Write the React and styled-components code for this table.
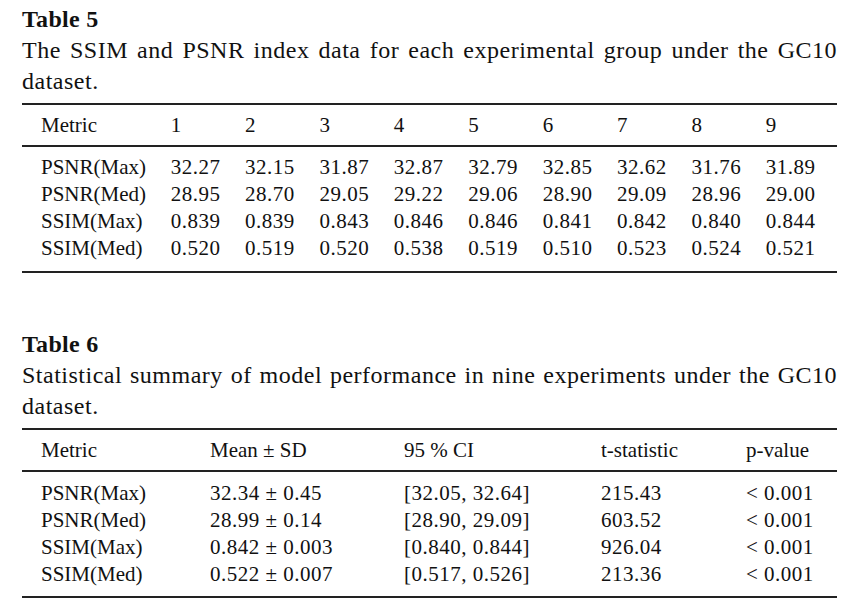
import React from "react";
import styled, { createGlobalStyle } from "styled-components";

const Global = createGlobalStyle`
  html, body { margin: 0; padding: 0; background: #fff; }
  body { font-family: "Liberation Serif", "Times New Roman", serif; color: #111; }
`;

const Page = styled.div`
  width: 815px;
  padding: 4px 0 0 22px;
`;

const Block = styled.section`
  margin-bottom: ${(p) => p.$gap || 0}px;
`;

const Heading = styled.div`
  font-size: 24px;
  line-height: 31px;
  font-weight: bold;
  letter-spacing: 0.3px;
`;

const Caption = styled.p`
  margin: 0 0 6px;
  font-size: 24px;
  line-height: 31px;
  letter-spacing: 0.5px;
  text-align: justify;
`;

const Table = styled.div`
  border-top: 2px solid #222;
  border-bottom: 2px solid #222;
`;

const Head = styled.div`
  padding: 7px 0 6px;
  border-bottom: 2px solid #222;
`;

const Body = styled.div`
  padding: ${(p) => p.$pad};
`;

const Row = styled.div`
  display: grid;
  grid-template-columns: ${(p) => p.$cols};
  padding-left: 19px;
  font-size: 21px;
  line-height: 27px;
  white-space: nowrap;
`;

const Cell = styled.span`
  letter-spacing: ${(p) => (p.$num ? "0.5px" : "0")};
`;

const cols5 = "129.7px repeat(8, 74.4px) 1fr";
const cols6 = "169px 194px 197px 145px 1fr";

const t5 = [
  ["PSNR(Max)", "32.27", "32.15", "31.87", "32.87", "32.79", "32.85", "32.62", "31.76", "31.89"],
  ["PSNR(Med)", "28.95", "28.70", "29.05", "29.22", "29.06", "28.90", "29.09", "28.96", "29.00"],
  ["SSIM(Max)", "0.839", "0.839", "0.843", "0.846", "0.846", "0.841", "0.842", "0.840", "0.844"],
  ["SSIM(Med)", "0.520", "0.519", "0.520", "0.538", "0.519", "0.510", "0.523", "0.524", "0.521"],
];

const t6 = [
  ["PSNR(Max)", "32.34 ± 0.45", "[32.05, 32.64]", "215.43", "< 0.001"],
  ["PSNR(Med)", "28.99 ± 0.14", "[28.90, 29.09]", "603.52", "< 0.001"],
  ["SSIM(Max)", "0.842 ± 0.003", "[0.840, 0.844]", "926.04", "< 0.001"],
  ["SSIM(Med)", "0.522 ± 0.007", "[0.517, 0.526]", "213.36", "< 0.001"],
];

function DataTable({ cols, header, rows, bodyPad }) {
  return (
    <Table>
      <Head>
        <Row $cols={cols}>
          {header.map((h, i) => (
            <Cell key={i} $num={i > 0 && /^\d$/.test(h)}>{h}</Cell>
          ))}
        </Row>
      </Head>
      <Body $pad={bodyPad}>
        {rows.map((r, i) => (
          <Row key={i} $cols={cols}>
            {r.map((c, j) => (
              <Cell key={j} $num={j > 0}>{c}</Cell>
            ))}
          </Row>
        ))}
      </Body>
    </Table>
  );
}

export default function App() {
  return (
    <>
      <Global />
      <Page>
        <Block $gap={56}>
          <Heading>Table 5</Heading>
          <Caption>
            The SSIM and PSNR index data for each experimental group under the GC10 dataset.
          </Caption>
          <DataTable
            cols={cols5}
            header={["Metric", "1", "2", "3", "4", "5", "6", "7", "8", "9"]}
            rows={t5}
            bodyPad="7px 0 9px"
          />
        </Block>
        <Block>
          <Heading>Table 6</Heading>
          <Caption>
            Statistical summary of model performance in nine experiments under the GC10 dataset.
          </Caption>
          <DataTable
            cols={cols6}
            header={["Metric", "Mean ± SD", "95 % CI", "t-statistic", "p-value"]}
            rows={t6}
            bodyPad="8px 0 8px"
          />
        </Block>
      </Page>
    </>
  );
}
